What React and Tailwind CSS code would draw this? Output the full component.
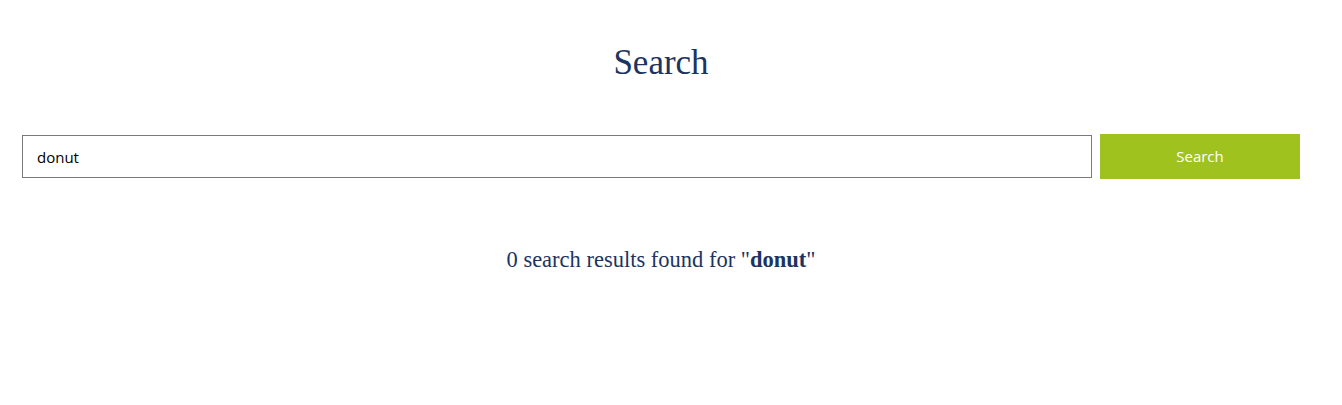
export default function App() {
  return (
    <div className="min-h-[405px] bg-white pl-[22px] pr-[42px]">
      <h1 className="pt-[41px] text-center font-['Liberation_Serif',Georgia,serif] text-[35px] leading-[44px] text-[#1b3461]">
        Search
      </h1>

      <form className="mt-[49px] flex items-center gap-2" onSubmit={(e) => e.preventDefault()}>
        <input
          type="text"
          defaultValue="donut"
          className="h-[43px] flex-1 border border-[#7a7a7a] px-[14px] font-['Open_Sans','Liberation_Sans',sans-serif] text-[15px] text-black outline-none"
        />
        <button
          type="submit"
          className="h-[45px] w-[200px] bg-[#a0c21f] font-['Open_Sans','Liberation_Sans',sans-serif] text-[15px] font-medium text-white"
        >
          Search
        </button>
      </form>

      <p className="mt-[64px] text-center font-['Liberation_Serif',Georgia,serif] text-[22.5px] text-[#1b3461]">
        0 search results found for "<strong>donut</strong>"
      </p>
    </div>
  );
}
